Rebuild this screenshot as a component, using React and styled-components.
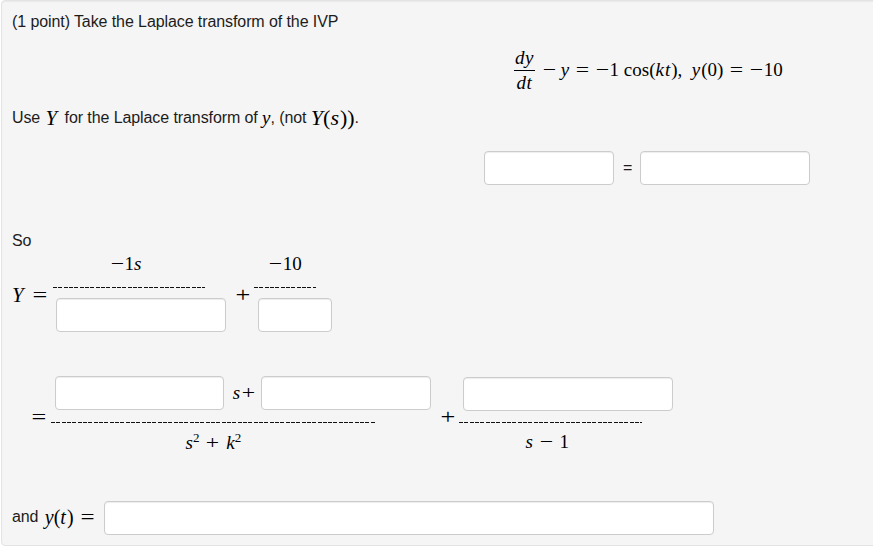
import React from 'react';
import styled, { createGlobalStyle } from 'styled-components';

const GlobalStyle = createGlobalStyle`
    html, body {
        margin: 0;
        padding: 0;
        background: #ffffff;
    }
`;

const Panel = styled.div`
    box-sizing: border-box;
    width: 880px;
    height: 546px;
    margin-left: 1px;
    padding: 12px 0 0 10px;
    background: #f5f5f5;
    border: 1px solid #e3e3e3;
    border-radius: 4px;
    font-family: "Liberation Sans", Arial, sans-serif;
    font-size: 16px;
    letter-spacing: -0.09px;
    color: #1c1c1c;
    box-shadow: inset 0 1px 1px rgba(0, 0, 0, 0.05);
`;

// plain line of prose
const Line = styled.div`
    display: flex;
    flex: none;
    align-items: center;
    height: 18px;
    width: ${({ $width }) => ($width ? `${$width}px` : 'auto')};
    margin-top: ${({ $top }) => $top || 0}px;
    white-space: pre;
`;

// row of math parts, hung from the top
const Row = styled.div`
    display: flex;
    align-items: flex-start;
    height: ${({ $height }) => $height}px;
    margin-top: ${({ $top }) => $top || 0}px;
    padding-left: ${({ $left }) => $left || 0}px;
`;

const Math = styled.span`
    font-family: "Liberation Serif", "Times New Roman", serif;
    font-size: ${({ $size }) => $size || 19}px;
    letter-spacing: 0;
    color: #000;
    white-space: pre;
    margin-top: ${({ $top }) => $top || 0}px;
    margin-left: ${({ $left }) => $left || 0}px;
    margin-right: ${({ $right }) => $right || 0}px;
    line-height: 22px;
`;

const Var = styled.i`
    font-family: "Liberation Serif", "Times New Roman", serif;
    letter-spacing: ${({ $track }) => $track || 0}px;
`;

// operators are wider in the TeX font, so stretch and pad them out
const Op = styled.span`
    display: inline-block;
    transform: scaleX(1.25);
    margin-left: ${({ $l }) => ($l === undefined ? 8 : $l)}px;
    margin-right: ${({ $r }) => ($r === undefined ? 8 : $r)}px;
`;

const Sup = styled.sup`
    font-size: 13px;
    line-height: 0;
`;

const Field = styled.div`
    box-sizing: border-box;
    flex: none;
    width: ${({ $width }) => $width}px;
    height: ${({ $height }) => $height || 34}px;
    margin-left: ${({ $left }) => $left || 0}px;
    margin-top: ${({ $top }) => $top || 0}px;
    background: #fff;
    border: 1px solid #ccc;
    border-radius: 4px;
    box-shadow: inset 0 1px 1px rgba(0, 0, 0, 0.075);
`;

const Fraction = styled.div`
    flex: none;
    width: ${({ $width }) => $width}px;
    margin-left: ${({ $left }) => $left || 0}px;
`;

const Centered = styled.div`
    display: flex;
    justify-content: center;
    align-items: center;
    height: ${({ $height }) => $height}px;
    margin-top: ${({ $top }) => $top || 0}px;
    padding-right: ${({ $pad }) => $pad || 0}px;
`;

// fraction bar made of hyphens in the original, one hyphen is 5.33px wide
const Dashes = styled.div`
    height: 1px;
    margin-top: ${({ $top }) => $top || 0}px;
    background: repeating-linear-gradient(90deg, #111 0 4px, transparent 4px 5.33px);
`;

const Solid = styled.div`
    height: 1px;
    background: #000;
`;

const Slot = styled.div`
    display: flex;
    align-items: center;
`;

const SmallEq = styled.span`
    font-size: 16px;
    margin: 8px 0 0 9px;
    width: 17px;
`;

export default function App() {
    return (
        <>
            <GlobalStyle />
            <Panel>
                <Line>(1 point) Take the Laplace transform of the IVP</Line>

                <Row $height={50} $top={14} $left={502}>
                    <Fraction $width={21}>
                        <Centered $height={25}>
                            <Math><Var $track={0.5}>dy</Var></Math>
                        </Centered>
                        <Solid />
                        <Centered $height={24}>
                            <Math><Var $track={0.5}>dt</Var></Math>
                        </Centered>
                    </Fraction>
                    <Math $top={14} $left={3}>
                        <Op $l={6} $r={6}>−</Op><Var>y</Var><Op>=</Op><Op $l={1} $r={2}>−</Op>1 cos(<Var $track={1}>kt</Var>),{'  '}<Var $track={1}>y</Var>(0)<Op $l={8}>=</Op><Op $l={1} $r={2}>−</Op>10
                    </Math>
                </Row>

                <Line $top={14}>
                    Use <Math $size={21} $left={1} $right={3}><Var>Y</Var></Math> for the Laplace transform of <Math><Var>y</Var></Math>, (not <Math $size={22}><Var>Y</Var>(<Var $track={1}>s</Var>)</Math><Math $size={22}>)</Math>.
                </Line>

                <Row $height={34} $top={24} $left={472}>
                    <Field $width={130} />
                    <SmallEq>=</SmallEq>
                    <Field $width={170} />
                </Row>

                <Line $top={47}>So</Line>

                <Row $height={84} $top={2}>
                    <Math $size={21} $top={32}><Var>Y</Var><Op $l={10} $r={6}>=</Op></Math>
                    <Fraction $width={152} $left={1}>
                        <Centered $height={24} $pad={4}>
                            <Math><Op $l={1} $r={2}>−</Op>1<Var $track={1}>s</Var></Math>
                        </Centered>
                        <Dashes $top={11} />
                        <Field $width={170} $left={3} $top={10} />
                    </Fraction>
                    <Math $size={21} $top={32} $left={32}><Op $l={0} $r={0}>+</Op></Math>
                    <Fraction $width={62} $left={6}>
                        <Centered $height={24}>
                            <Math><Op $l={1} $r={2}>−</Op>10</Math>
                        </Centered>
                        <Dashes $top={11} />
                        <Field $width={74} $left={4} $top={10} />
                    </Fraction>
                </Row>

                <Row $height={90} $top={40}>
                    <Math $size={21} $top={30} $left={21}><Op $l={0} $r={0}>=</Op></Math>
                    <Fraction $width={325} $left={6}>
                        <Slot>
                            <Field $width={169} $left={4} />
                            <Math $left={9}><Var>s</Var><Op $l={3} $r={3}>+</Op></Math>
                            <Field $width={170} $left={4} />
                        </Slot>
                        <Dashes $top={12} />
                        <Centered $height={26} $top={7}>
                            <Math><Var>s</Var><Sup>2</Sup><Op>+</Op><Var>k</Var><Sup>2</Sup></Math>
                        </Centered>
                    </Fraction>
                    <Math $size={21} $top={30} $left={66}><Op $l={0} $r={0}>+</Op></Math>
                    <Fraction $width={183} $left={5}>
                        <Field $width={210} $left={4} $top={1} />
                        <Dashes $top={11} />
                        <Centered $height={26} $top={6} $pad={6}>
                            <Math><Var>s</Var><Op>−</Op>1</Math>
                        </Centered>
                    </Fraction>
                </Row>

                <Row $height={34} $top={35}>
                    <Line $top={7} $width={92}>
                        and <Math $size={20} $left={2}><Var>y</Var>(<Var $track={1}>t</Var>)<Op $l={8} $r={0}>=</Op></Math>
                    </Line>
                    <Field $width={610} />
                </Row>
            </Panel>
        </>
    );
}
